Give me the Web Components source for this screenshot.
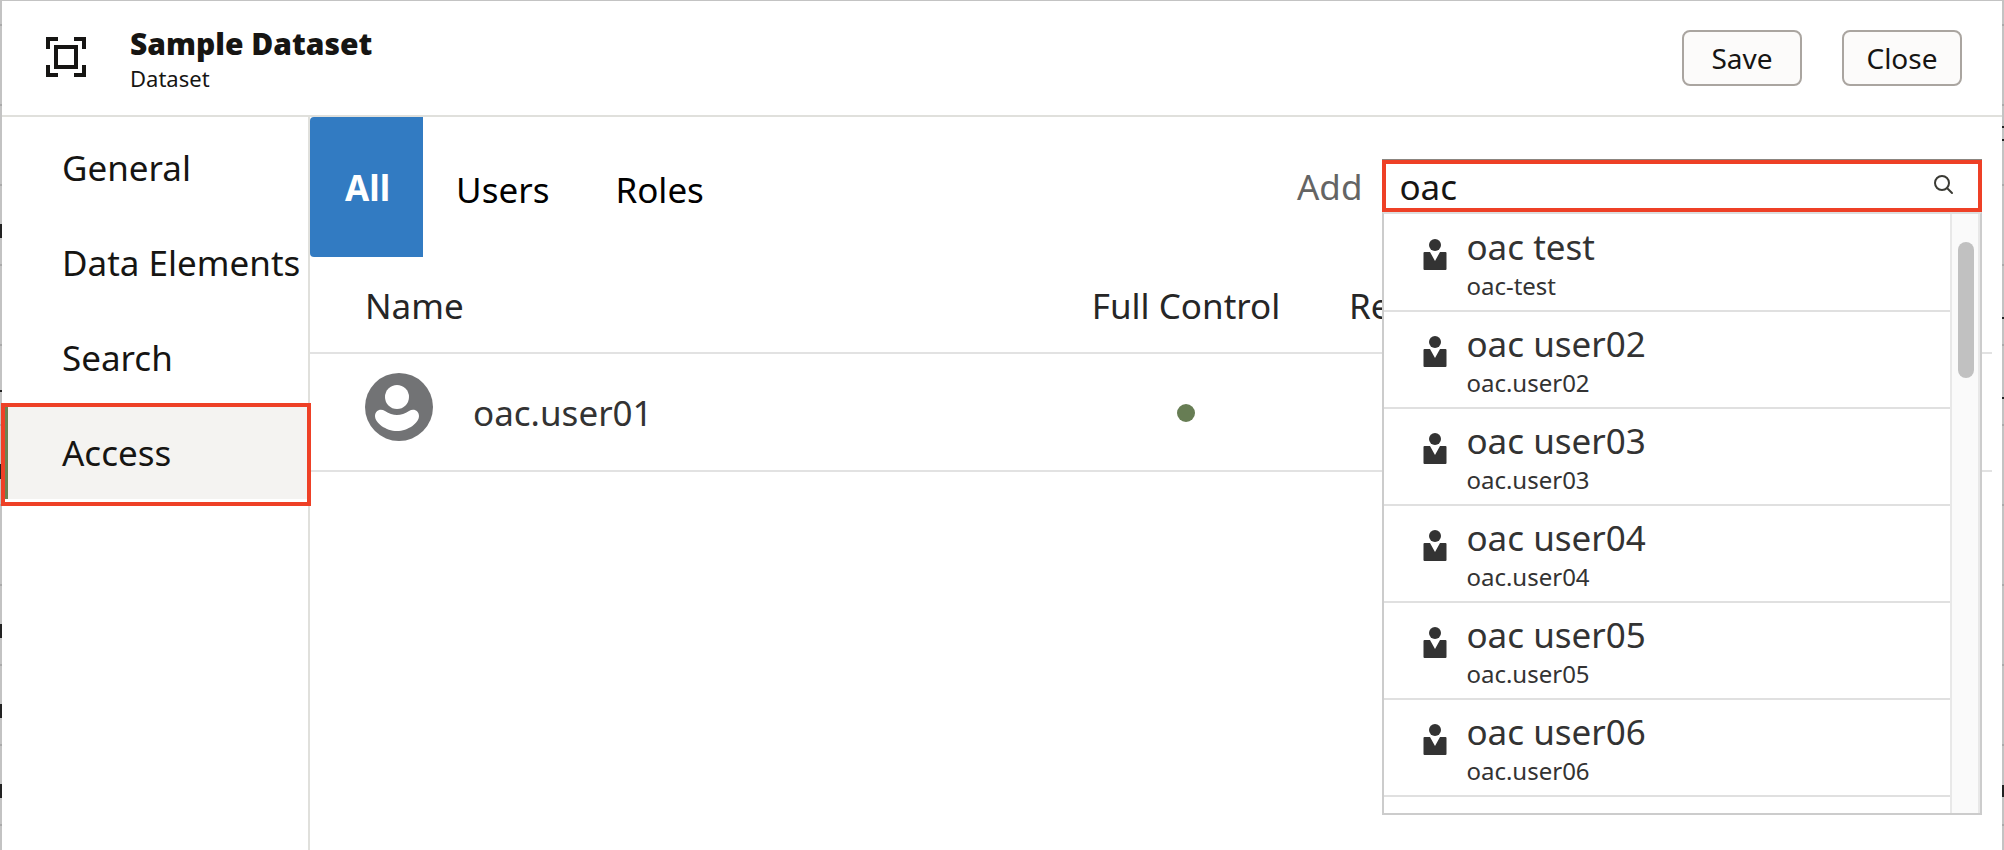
<!DOCTYPE html>
<html lang="en">
<head>
<meta charset="utf-8">
<meta name="viewport" content="width=device-width, initial-scale=1">
<title>Sample Dataset</title>
<style>
  body { margin: 0; font-family: "Noto Sans", "Open Sans", sans-serif; color: #161513; background: #fff; }
</style>
</head>
<body>
<dataset-dialog>
  <dialog-header slot="header" heading="Sample Dataset" kind="Dataset">
    <action-button>Save</action-button>
    <action-button>Close</action-button>
  </dialog-header>
  <side-nav slot="nav">
    <nav-item href="#general">General</nav-item>
    <nav-item href="#data-elements">Data Elements</nav-item>
    <nav-item href="#search">Search</nav-item>
    <nav-item href="#access" current>Access</nav-item>
  </side-nav>
  <access-toolbar>
    <filter-tab selected>All</filter-tab>
    <filter-tab>Users</filter-tab>
    <filter-tab>Roles</filter-tab>
    <people-picker slot="end" value="oac">
      <people-option login="oac-test">oac test</people-option>
      <people-option login="oac.user02">oac user02</people-option>
      <people-option login="oac.user03">oac user03</people-option>
      <people-option login="oac.user04">oac user04</people-option>
      <people-option login="oac.user05">oac user05</people-option>
      <people-option login="oac.user06">oac user06</people-option>
    </people-picker>
  </access-toolbar>
  <access-table user="oac.user01"></access-table>
</dataset-dialog>

<script>
const define = (name, html, setup) => {
  const template = document.createElement('template');
  template.innerHTML = html;
  customElements.define(name, class extends HTMLElement {
    constructor() {
      super();
      this.attachShadow({ mode: 'open' }).append(template.content.cloneNode(true));
    }
    connectedCallback() {
      if (setup) setup(this, this.shadowRoot);
    }
  });
};

/* Dialog frame; the dimmed page behind it shows as a thin strip on each side. */
define('dataset-dialog', `
  <style>
    :host {
      display: flex; flex-direction: column; box-sizing: border-box; min-height: 100vh;
      padding: 1px 2px 0;
      background:
        linear-gradient(#222, #222) 0 224px / 2px 14px no-repeat,
        linear-gradient(#222, #222) 0 390px / 2px 2px no-repeat,
        linear-gradient(#222, #222) 0 464px / 1px 15px no-repeat,
        linear-gradient(#222, #222) 0 624px / 2px 14px no-repeat,
        linear-gradient(#222, #222) 0 704px / 2px 14px no-repeat,
        linear-gradient(#222, #222) 0 784px / 2px 14px no-repeat,
        linear-gradient(#222, #222) 100% 126px / 2px 2px no-repeat,
        linear-gradient(#222, #222) 100% 139px / 2px 2px no-repeat,
        linear-gradient(#222, #222) 100% 317px / 2px 2px no-repeat,
        linear-gradient(#222, #222) 100% 397px / 2px 2px no-repeat,
        linear-gradient(#222, #222) 100% 785px / 2px 12px no-repeat,
        repeating-linear-gradient(#c3c3c3 0 24px, #aaa 24px 26px, #c3c3c3 26px 80px);
    }
    .body { flex: 1; display: flex; background: #fff; }
    main { flex: 1; min-width: 0; }
  </style>
  <slot name="header"></slot>
  <div class="body">
    <slot name="nav"></slot>
    <main><slot></slot></main>
  </div>`);

define('dialog-header', `
  <style>
    :host {
      display: flex; align-items: center; box-sizing: border-box; min-height: 116px;
      padding: 0 40px 0 44px; background: #fff; border-bottom: 2px solid #e0e0dc;
    }
    svg { flex: none; width: 40px; height: 40px; margin: 0 44px 2px 0; fill: none; stroke: #161513; stroke-width: 4; }
    .titles { flex: 1; padding-top: 2px; }
    h1 { margin: 0; font-size: 30px; line-height: 38px; font-weight: 900; }
    p { margin: 0; font-size: 22px; line-height: 31px; }
    .actions { display: flex; gap: 40px; }
  </style>
  <svg viewBox="0 0 40 40" aria-hidden="true">
    <path d="M2 12V2H12M28 2H38V12M38 28V38H28M12 38H2V28"/>
    <rect x="10" y="10" width="20" height="20"/>
  </svg>
  <div class="titles"><h1></h1><p></p></div>
  <div class="actions"><slot></slot></div>`,
  (host, root) => {
    root.querySelector('h1').textContent = host.getAttribute('heading');
    root.querySelector('p').textContent = host.getAttribute('kind');
  });

define('action-button', `
  <style>
    :host { display: block; }
    button {
      display: block; min-width: 120px; height: 56px; padding: 0 16px; border: 2px solid #aaa5a0;
      border-radius: 8px; background: #fcfbfa; color: inherit; font: inherit; font-size: 28px; line-height: 52px;
    }
  </style>
  <button type="button"><slot></slot></button>`);

define('side-nav', `
  <style>
    :host { display: block; flex: none; box-sizing: border-box; width: 308px; border-right: 2px solid #e0e0dc; padding-top: 2px; }
  </style>
  <nav aria-label="Dataset sections"><slot></slot></nav>`);

define('nav-item', `
  <style>
    :host { display: block; position: relative; }
    a {
      display: block; padding: 2px 0 0 57px; border-left: 3px solid transparent; color: inherit;
      text-decoration: none; font-size: 35px; line-height: 93px; white-space: nowrap;
    }
    :host([current]) a { background: #f4f3f1; border-color: #6b8253; box-shadow: inset 3px 0 #6b8253; }
    /* Highlight frame laid over the current section. */
    :host([current])::after {
      content: ""; position: absolute; inset: -1px -3px -7px -1px; border: 4px solid #ee4026; pointer-events: none;
    }
  </style>
  <a><slot></slot></a>`,
  (host, root) => {
    const link = root.querySelector('a');
    link.href = host.getAttribute('href');
    if (host.hasAttribute('current')) link.setAttribute('aria-current', 'page');
  });

define('access-toolbar', `
  <style>
    :host { display: flex; justify-content: space-between; min-height: 140px; padding-right: 20px; }
    .tabs { display: flex; }
  </style>
  <div class="tabs"><slot></slot></div>
  <slot name="end"></slot>`);

define('filter-tab', `
  <style>
    :host { display: flex; }
    button {
      border: 0; padding: 4px 33px 0; background: none; color: #000; font: inherit; font-size: 35px;
    }
    :host([selected]) button {
      padding: 0 33px 0 35px; background: #327bc2; color: #fff; font-weight: 700; border-radius: 4px 0 0 4px;
    }
  </style>
  <button type="button"><slot></slot></button>`,
  (host, root) => {
    root.querySelector('button').setAttribute('aria-pressed', host.hasAttribute('selected'));
  });

define('people-picker', `
  <style>
    :host { display: flex; flex: 0 1 685px; padding-top: 42px; }
    label { font-size: 35px; line-height: 56px; color: #646464; margin-right: 20px; }
    .box { position: relative; flex: 1; height: 53px; box-sizing: border-box; border-top: 1px solid #8b8580; }
    input {
      display: block; box-sizing: border-box; width: 100%; height: 52px; padding: 0 60px 0 13px;
      border: 4px solid #ee4026; border-radius: 0; outline: 0; background: #fff; color: inherit;
      font: inherit; font-size: 35px;
    }
    .search { position: absolute; right: 27px; top: 14px; width: 22px; height: 22px; fill: none; stroke: #3a3a34; stroke-width: 2; stroke-linecap: round; }
    .menu {
      position: absolute; z-index: 1; top: 100%; left: 0; right: 0; height: 603px; box-sizing: border-box;
      display: flex; background: #fff; border: 2px solid #ccc; border-top-color: #dedede;
    }
    .list { flex: 1; padding-top: 1px; overflow: hidden; }
    .track { flex: none; width: 26px; border: solid #e8e8e8; border-width: 0 2px; background: #fafafa; }
    .thumb { width: 16px; height: 136px; margin: 28px 0 0 6px; border-radius: 8px; background: #c1c1c1; }
  </style>
  <label for="who">Add</label>
  <div class="box">
    <input id="who" type="text" role="combobox" aria-expanded="true" aria-controls="matches" autocomplete="off">
    <svg class="search" viewBox="0 0 22 22" aria-hidden="true"><circle cx="9" cy="9" r="7"/><path d="M14 14L19 19"/></svg>
    <div class="menu">
      <div class="list" id="matches" role="listbox" aria-label="Matches"><slot></slot></div>
      <div class="track"><div class="thumb"></div></div>
    </div>
  </div>`,
  (host, root) => { root.querySelector('input').value = host.getAttribute('value'); });

define('people-option', `
  <style>
    :host {
      display: flex; box-sizing: border-box; height: 97px; padding: 9px 0 0 39px;
      border-bottom: 2px solid #e0e0e0; color: #333;
    }
    svg { flex: none; width: 24px; height: 32px; margin: 15px 19px 0 0; fill: #333; }
    .name { font-size: 35px; line-height: 46px; }
    .login { font-size: 24px; line-height: 32px; }
  </style>
  <svg viewBox="0 0 24 32" aria-hidden="true">
    <circle cx="12" cy="6" r="6"/>
    <path d="M1.500 13H7L12 22L17 13H22.500Q23.500 13 23.500 14V30Q23.500 31 22.500 31H1.500Q.5 31 .5 30V14Q.5 13 1.500 13Z"/>
  </svg>
  <div>
    <div class="name"><slot></slot></div>
    <div class="login"></div>
  </div>`,
  (host, root) => {
    host.setAttribute('role', 'option');
    root.querySelector('.login').textContent = host.getAttribute('login');
  });

define('access-table', `
  <style>
    :host { display: block; padding-right: 10px; }
    table { width: 100%; table-layout: fixed; border-collapse: separate; border-spacing: 0; font-size: 35px; }
    th, td { box-sizing: border-box; padding: 0; border-bottom: 2px solid #e2e2e2; text-align: left; font-weight: 400; }
    th { height: 97px; padding-top: 2px; color: #262626; }
    td { height: 118px; color: #333; }
    th:first-child, td:first-child { padding-left: 55px; }
    .level { width: 262px; text-align: center; }
    .last { width: 675px; padding-left: 32px; }
    .user { display: flex; align-items: center; gap: 40px; }
    .user svg { flex: none; width: 68px; height: 68px; margin-bottom: 10px; }
    .dot { display: block; width: 18px; height: 18px; margin: 2px auto 0; border-radius: 50%; background: #677d54; }
  </style>
  <table>
    <thead>
      <tr><th scope="col">Name</th><th scope="col" class="level">Full Control</th><th scope="col" class="last">Read</th></tr>
    </thead>
    <tbody>
      <tr>
        <td><div class="user">
          <svg viewBox="0 0 68 68" aria-hidden="true">
            <circle cx="34" cy="34" r="34" fill="#727375"/>
            <circle cx="32" cy="24" r="12" fill="#fff"/>
            <path fill="#fff" d="M20 38Q32 46 44 38C49 35 54 38 54 43C54 50 43 58 32 58S10 50 10 43C10 38 15 35 20 38Z"/>
          </svg>
          <span class="login"></span>
        </div></td>
        <td class="level"><span class="dot" role="img" aria-label="Granted"></span></td>
        <td class="last"></td>
      </tr>
    </tbody>
  </table>`,
  (host, root) => { root.querySelector('.login').textContent = host.getAttribute('user'); });
</script>
</body>
</html>
